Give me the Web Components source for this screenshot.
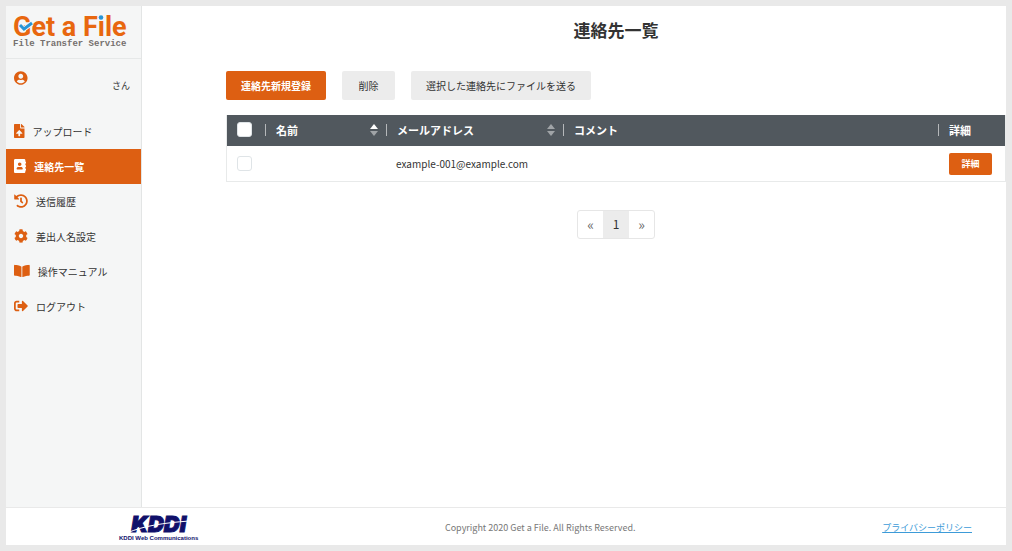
<!DOCTYPE html>
<html lang="ja">
<head>
<meta charset="utf-8">
<meta name="viewport" content="width=device-width, initial-scale=1">
<title>連絡先一覧 | Get a File</title>
<style>
body{margin:0;background:#e9e9e9;color:#333;font-family:"Noto Sans CJK JP",sans-serif;font-size:10px;line-height:16px}
</style>
</head>
<body>
<gaf-app>
  <gaf-sidebar slot="side">
    <gaf-nav-item icon="upload">アップロード</gaf-nav-item>
    <gaf-nav-item icon="contacts" active>連絡先一覧</gaf-nav-item>
    <gaf-nav-item icon="history">送信履歴</gaf-nav-item>
    <gaf-nav-item icon="cog">差出人名設定</gaf-nav-item>
    <gaf-nav-item icon="book">操作マニュアル</gaf-nav-item>
    <gaf-nav-item icon="logout">ログアウト</gaf-nav-item>
  </gaf-sidebar>
  <gaf-toolbar>
    <gaf-button kind="primary">連絡先新規登録</gaf-button>
    <gaf-button>削除</gaf-button>
    <gaf-button>選択した連絡先にファイルを送る</gaf-button>
  </gaf-toolbar>
  <gaf-contacts></gaf-contacts>
  <gaf-pager></gaf-pager>
  <gaf-footer slot="foot"></gaf-footer>
</gaf-app>
<script>
const ICONS = {
  user: [496, 'M248 8C111 8 0 119 0 256s111 248 248 248 248-111 248-248S385 8 248 8zm0 96c48.6 0 88 39.4 88 88s-39.4 88-88 88-88-39.4-88-88 39.4-88 88-88zm0 344c-58.7 0-111.3-26.6-146.5-68.2 18.8-35.4 55.6-59.8 98.5-59.8 2.4 0 4.8.4 7.1 1.1 13 4.2 26.6 6.9 40.9 6.9 14.3 0 28-2.7 40.9-6.9 2.3-.7 4.7-1.1 7.1-1.1 42.9 0 79.7 24.4 98.5 59.8C359.3 421.4 306.7 448 248 448z'],
  upload: [384, 'M224 136V0H24C10.7 0 0 10.7 0 24v464c0 13.3 10.7 24 24 24h336c13.3 0 24-10.7 24-24V160H248c-13.2 0-24-10.8-24-24zm65.18 216.01H224v80c0 8.84-7.16 16-16 16h-32c-8.84 0-16-7.16-16-16v-80H94.82c-14.28 0-21.41-17.29-11.27-27.36l96.42-95.7c6.65-6.61 17.39-6.61 24.04 0l96.42 95.7c10.15 10.07 3.03 27.36-11.25 27.36zM377 105L279.1 7c-4.5-4.5-10.6-7-17-7H256v128h128v-6.1c0-6.3-2.5-12.4-7-16.9z'],
  contacts: [448, 'M436 160c6.6 0 12-5.4 12-12v-40c0-6.6-5.4-12-12-12h-20V48c0-26.5-21.5-48-48-48H48C21.5 0 0 21.5 0 48v416c0 26.5 21.5 48 48 48h320c26.5 0 48-21.5 48-48v-48h20c6.6 0 12-5.4 12-12v-40c0-6.6-5.4-12-12-12h-20v-64h20c6.6 0 12-5.4 12-12v-40c0-6.6-5.4-12-12-12h-20v-64h20zm-228-32c35.3 0 64 28.7 64 64s-28.7 64-64 64-64-28.7-64-64 28.7-64 64-64zm112 236.8c0 10.6-10 19.2-22.4 19.2H118.4C106 384 96 375.4 96 364.8v-19.2c0-31.8 30.1-57.6 67.2-57.6h5c12.3 5.1 25.7 8 39.8 8s27.6-2.9 39.8-8h5c37.1 0 67.2 25.8 67.2 57.6v19.2z'],
  history: [512, 'M504 255.531c.253 136.64-111.18 248.372-247.82 248.468-59.015.042-113.223-20.53-155.822-54.911-11.077-8.94-11.905-25.541-1.839-35.607l11.267-11.267c8.609-8.609 22.353-9.551 31.891-1.984C173.062 425.135 212.781 440 256 440c101.705 0 184-82.311 184-184 0-101.705-82.311-184-184-184-48.814 0-93.149 18.969-126.068 49.932l50.754 50.754c10.08 10.08 2.941 27.314-11.313 27.314H24c-8.837 0-16-7.163-16-16V38.627c0-14.254 17.234-21.393 27.314-11.314l49.372 49.372C129.209 34.136 189.552 8 256 8c136.81 0 247.747 110.78 248 247.531zm-180.912 78.784l9.823-12.63c8.138-10.463 6.253-25.542-4.21-33.679L288 256.349V152c0-13.255-10.745-24-24-24h-16c-13.255 0-24 10.745-24 24v135.651l65.409 50.874c10.463 8.137 25.541 6.253 33.679-4.21z'],
  cog: [512, 'M487.4 315.7l-42.6-24.6c4.3-23.2 4.3-47 0-70.2l42.6-24.6c4.9-2.8 7.1-8.6 5.5-14-11.1-35.6-30-67.8-54.7-94.6-3.8-4.1-10-5.1-14.8-2.3L380.8 110c-17.9-15.4-38.5-27.3-60.8-35.1V25.8c0-5.6-3.9-10.5-9.4-11.7-36.7-8.2-74.3-7.8-109.2 0-5.5 1.2-9.4 6.1-9.4 11.7V75c-22.2 7.9-42.8 19.8-60.8 35.1L88.7 85.5c-4.9-2.8-11-1.9-14.8 2.3-24.7 26.7-43.6 58.9-54.7 94.6-1.7 5.4.6 11.2 5.5 14L67.3 221c-4.3 23.2-4.3 47 0 70.2l-42.6 24.6c-4.9 2.8-7.1 8.6-5.5 14 11.1 35.6 30 67.8 54.7 94.6 3.8 4.1 10 5.1 14.8 2.3l42.6-24.6c17.9 15.4 38.5 27.3 60.8 35.1v49.2c0 5.6 3.9 10.5 9.4 11.7 36.7 8.2 74.3 7.8 109.2 0 5.5-1.2 9.4-6.1 9.4-11.7v-49.2c22.2-7.9 42.8-19.8 60.8-35.1l42.6 24.6c4.9 2.8 11 1.9 14.8-2.3 24.7-26.7 43.6-58.9 54.7-94.6 1.5-5.5-.7-11.3-5.6-14.1zM256 336c-44.1 0-80-35.9-80-80s35.9-80 80-80 80 35.9 80 80-35.9 80-80 80z'],
  book: [576, 'M542.22 32.05c-54.8 3.11-163.72 14.43-230.96 55.59-4.64 2.84-7.27 7.89-7.27 13.17v363.87c0 11.55 12.63 18.85 23.28 13.49 69.18-34.82 169.23-44.32 218.7-46.92 16.89-.89 30.02-14.43 30.02-30.66V62.75c.01-17.71-15.35-31.74-33.77-30.7zM264.73 87.64C197.5 46.48 88.58 35.17 33.78 32.05 15.36 31.01 0 45.04 0 62.75V400.6c0 16.24 13.13 29.78 30.02 30.66 49.49 2.6 149.59 12.11 218.77 46.95 10.62 5.35 23.21-1.94 23.21-13.46V100.63c0-5.29-2.62-10.14-7.27-12.99z'],
  logout: [512, 'M497 273L329 441c-15 15-41 4.5-41-17v-96H152c-13.3 0-24-10.7-24-24v-96c0-13.3 10.7-24 24-24h136V88c0-21.4 25.9-32 41-17l168 168c9.3 9.4 9.3 24.6 0 34zM192 436v-40c0-6.6-5.4-12-12-12H96c-17.7 0-32-14.3-32-32V160c0-17.7 14.3-32 32-32h84c6.6 0 12-5.4 12-12V76c0-6.6-5.4-12-12-12H96c-53 0-96 43-96 96v192c0 53 43 96 96 96h84c6.6 0 12-5.4 12-12z']
};
const icon = n => `<svg viewBox="0 0 ${ICONS[n][0]} 512" height="14" fill="currentColor" aria-hidden="true"><path d="${ICONS[n][1]}"/></svg>`;

function define(name, render) {
  customElements.define(name, class extends HTMLElement {
    constructor() { super(); this.attachShadow({ mode: 'open' }); }
    connectedCallback() { this.shadowRoot.innerHTML = '<style>*{box-sizing:border-box}</style>' + render(this); }
  });
}

define('gaf-app', () => `<style>
:host{display:grid;box-sizing:border-box;min-height:100vh;border:6px solid #e9e9e9;background:#fff;grid-template:1fr auto / 136px minmax(0,1fr)}
main{padding:12px 0 24px 84px}
h1{margin:0 0 29px;font-size:17px;line-height:24px;font-weight:700;text-align:center}
.foot{grid-column:1 / -1}
</style><slot name="side"></slot><main><h1>連絡先一覧</h1><slot></slot></main><div class="foot"><slot name="foot"></slot></div>`);

define('gaf-logo', () => `<style>
:host{display:block}
a{display:block;position:relative;padding:8px 0 0 7px;height:53px;border-bottom:1px solid #e6e8e8;text-decoration:none;white-space:nowrap}
b{display:block;font:700 27px/26px Roboto,sans-serif;color:#e8670f}
small{display:block;font:700 9px/8px "Liberation Mono",monospace;color:#75706e}
svg{position:absolute;left:0;top:0}
</style><a href="#"><b>Get a File</b><small>File Transfer Service</small>
<svg width="136" height="52" fill="none" aria-hidden="true"><path d="M14 19l4 4 8-6" stroke="#f5f6f6" stroke-width="5"/><path d="M14 19l4 4 8-6" stroke="#2795d6" stroke-width="3"/><path d="M92.500 8h6v6.500h-6z" fill="#f5f6f6"/><circle cx="95" cy="11.500" r="2.300" fill="#2795d6"/></svg></a>`);

define('gaf-sidebar', () => `<style>
:host{display:block;background:#f5f6f6;border-right:1px solid #e3e5e5}
.user{display:flex;justify-content:space-between;height:55px;padding:12px 11px 0 8px;color:#dd5f12}
.user span{font-size:9px;line-height:30px;color:#333}
</style><gaf-logo></gaf-logo><div class="user">${icon('user')}<span>さん</span></div><nav><slot></slot></nav>`);

define('gaf-nav-item', el => `<style>
:host{display:block}
a{display:flex;align-items:center;gap:8px;height:35px;padding-left:8px;color:#333;text-decoration:none}
svg{color:#dd5f12;flex:none;margin-bottom:2px}
:host([active]) a{background:#dd5f12;color:#fff;font-weight:700}
:host([active]) svg{color:#fff}
</style><a href="#">${icon(el.getAttribute('icon'))}<span><slot></slot></span></a>`);

define('gaf-toolbar', () => `<style>:host{display:flex;flex-wrap:wrap;gap:16px;margin-bottom:15px}</style><slot></slot>`);

define('gaf-button', () => `<style>
:host{display:block}
button{height:29px;min-width:53px;padding:0 15px;border:0;border-radius:2px;background:#ececec;color:#333;font:inherit;cursor:pointer}
:host([kind]) button{background:#dd5f12;color:#fff;font-weight:700}
:host([size=small]) button{height:22px;min-width:43px;padding:0 8px;font-size:9px;line-height:12px}
</style><button type="button"><slot></slot></button>`);

define('gaf-check', el => `<style>
:host{display:block}
input{display:block;appearance:none;margin:0;width:15px;height:15px;border:1px solid #dfe4e7;border-radius:3px;background:#fff}
</style><input type="checkbox" aria-label="${el.getAttribute('label')}">`);

define('gaf-sort', el => `<style>
:host{display:block}
button{display:block;padding:0;border:0;background:none}
svg{display:block}
</style><button type="button" aria-label="並べ替え"><svg width="10" height="14" viewBox="0 0 10 14"><path d="M5 1l4 5H1z" fill="${el.hasAttribute('asc') ? '#fff' : '#a0a4a7'}"/><path d="M5 13l4-5H1z" fill="#a0a4a7"/></svg></button>`);

define('gaf-contacts', () => `<style>
:host{display:block}
table{width:100%;border-collapse:separate;border-spacing:0;table-layout:fixed;border:1px solid #e8eaea;border-top:0}
.c1{width:38px}.c2{width:121px}.c3{width:177px}.c5{width:67px}
th{height:31px;padding:0 0 2px;background:#51585e;color:#fff;font-size:11px;font-weight:700;text-align:left}
th div{display:flex;align-items:center;padding-right:7px}
th div::before{content:"";width:1px;height:12px;background:#b5b8ba;margin-right:10px}
th gaf-sort{margin-left:auto}
td{height:35px;padding:0 0 0 10px}
td:first-child,th:first-child{padding-left:10px}
td:last-child{padding-left:11px}
</style><table><colgroup><col class="c1"><col class="c2"><col class="c3"><col><col class="c5"></colgroup>
<thead><tr><th><gaf-check label="すべて選択"></gaf-check></th><th><div>名前<gaf-sort asc></gaf-sort></div></th><th><div>メールアドレス<gaf-sort></gaf-sort></div></th><th><div>コメント</div></th><th><div>詳細</div></th></tr></thead>
<tbody><tr><td><gaf-check label="選択"></gaf-check></td><td></td><td>example-001@example.com</td><td></td><td><gaf-button kind="primary" size="small">詳細</gaf-button></td></tr></tbody></table>`);

define('gaf-pager', () => `<style>
:host{display:flex;justify-content:center;margin-top:28px}
nav{display:flex;border:1px solid #e6e6e6;border-radius:3px}
a{width:25px;height:27px;line-height:26px;text-align:center;font-size:14px;color:#666;text-decoration:none}
a.on{width:26px;background:#ececec;font-size:12px;color:#333}
</style><nav aria-label="ページ"><a href="#">«</a><a href="#" class="on" aria-current="page">1</a><a href="#">»</a></nav>`);

define('gaf-footer', () => `<style>
:host{display:flex;justify-content:space-between;align-items:center;height:38px;box-sizing:border-box;padding:2px 34px 0 113px;border-top:1px solid #e9e9e9}
.kddi{display:block;position:relative;color:#10106a;text-decoration:none;text-align:center;white-space:nowrap}
.kddi b{display:block;font:italic 900 22px/20px Inter,sans-serif;-webkit-text-stroke:1px}
.kddi small{display:block;font:700 6px/8px "Liberation Sans",sans-serif}
.kddi svg{position:absolute;left:0;top:0}
p{margin:0;font-size:9px;line-height:12px;color:#777}
.policy{font-size:9px;line-height:12px;color:#3d9bd8}
</style><a class="kddi" href="#"><b>KDDI</b><small>KDDI Web Communications</small><svg width="76" height="20" fill="none" aria-hidden="true"><path d="M8 19C24 12 44 9 70 7" stroke="#fff"/></svg></a>
<p>Copyright 2020 Get a File. All Rights Reserved.</p><a class="policy" href="#">プライバシーポリシー</a>`);
</script>
</body>
</html>
